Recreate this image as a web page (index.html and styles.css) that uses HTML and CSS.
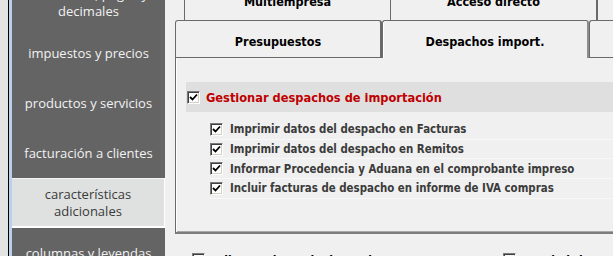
FILE: index.html
```
<!DOCTYPE html>
<html>
<head>
<meta charset="utf-8">
<link rel="stylesheet" href="styles.css">
</head>
<body>
<div class="screen">
  <div class="gutter"></div>
  <div class="rule"></div>
  <div class="accent"></div>
  <nav class="menu">
    <div class="item">cantidades, pagos y<br>decimales</div>
    <div class="item">impuestos y precios</div>
    <div class="item">productos y servicios</div>
    <div class="item">facturación a clientes</div>
    <div class="item selected">características<br>adicionales</div>
    <div class="item">columnas y leyendas</div>
  </nav>
  <main class="main">
    <div class="tabs-back">
      <div class="btab btab-first"><span class="blabel">Multiempresa</span></div>
      <div class="btab"><span class="blabel">Acceso directo</span></div>
    </div>
    <div class="tabs-front">
      <div class="ftab">Presupuestos</div>
      <div class="ftab active">Despachos import.</div>
      <div class="ftab last"></div>
    </div>
    <section class="panel">
      <div class="band">
        <span class="cb"><svg viewBox="0 0 9 9" width="9" height="9"><polyline points="1,4 3.5,6.5 8,1.5" fill="none" stroke="#000" stroke-width="1.8"/></svg></span>
        <span class="band-text">Gestionar despachos de importación</span>
      </div>
      <div class="rows">
        <div class="row"><span class="cb"><svg viewBox="0 0 9 9" width="9" height="9"><polyline points="1,4 3.5,6.5 8,1.5" fill="none" stroke="#000" stroke-width="1.8"/></svg></span><span class="row-text">Imprimir datos del despacho en Facturas</span></div>
        <div class="row"><span class="cb"><svg viewBox="0 0 9 9" width="9" height="9"><polyline points="1,4 3.5,6.5 8,1.5" fill="none" stroke="#000" stroke-width="1.8"/></svg></span><span class="row-text">Imprimir datos del despacho en Remitos</span></div>
        <div class="row"><span class="cb"><svg viewBox="0 0 9 9" width="9" height="9"><polyline points="1,4 3.5,6.5 8,1.5" fill="none" stroke="#000" stroke-width="1.8"/></svg></span><span class="row-text">Informar Procedencia y Aduana en el comprobante impreso</span></div>
        <div class="row"><span class="cb"><svg viewBox="0 0 9 9" width="9" height="9"><polyline points="1,4 3.5,6.5 8,1.5" fill="none" stroke="#000" stroke-width="1.8"/></svg></span><span class="row-text">Incluir facturas de despacho en informe de IVA compras</span></div>
      </div>
    </section>
    <div class="below">
      <div class="opt opt-a"><span class="cb empty"></span><span class="opt-text">Adjuntar datos de despacho</span></div>
      <div class="opt opt-b"><span class="cb empty"></span><span class="opt-text">Imprimir lote</span></div>
    </div>
  </main>
</div>
</body>
</html>
```
FILE: styles.css
```
* { box-sizing: border-box; }
html, body { margin: 0; padding: 0; }
body { width: 613px; height: 256px; overflow: hidden; background: #f0f0f0; }

.screen { display: flex; width: 613px; height: 256px; overflow: hidden; }
.gutter { width: 8px; background: #e3e3e3; flex: none; }
.rule { width: 1px; background: #000; flex: none; }
.accent { width: 3px; background: #b9d1ea; flex: none; }

.menu {
  width: 153px; flex: none; background: #646464;
  display: flex; flex-direction: column; margin-top: -22px;
  font-family: "Open Sans", "Noto Sans", sans-serif; font-size: 13px; color: #f2f2f2;
}
.item {
  height: 50px; flex: none; display: flex; align-items: center; justify-content: center;
  text-align: center; line-height: 17px;
}
.item.selected {
  background: #dfe1e1; color: #3a3a3a;
  border-top: 1px solid #f4f4f4; border-right: 1px solid #fff; border-bottom: 2px solid #fff;
}

.main {
  flex: 1; background: #f0f0f0; display: flex; flex-direction: column;
  font-family: "DejaVu Sans Condensed", "DejaVu Sans", sans-serif; font-weight: bold;
  font-stretch: condensed;
}

.tabs-back { height: 20px; display: flex; padding-left: 19px; flex: none; }
.btab {
  width: 207px; height: 20px; border-right: 2px solid #6a6a6a;
  display: flex; justify-content: center; align-items: flex-start;
  font-size: 12.5px; color: #000;
}
.btab-first { width: 207px; border-left: 1px solid #6a6a6a; border-right: 1px solid #6a6a6a; }
.blabel { display: block; line-height: 14px; margin-top: -5px; }

.tabs-front { height: 38px; display: flex; padding-left: 10px; flex: none; }
.ftab {
  width: 207px; height: 38px; flex: none;
  border-top: 1px solid #6a6a6a; border-left: 1px solid #6a6a6a;
  border-right: 2px solid #6a6a6a; border-bottom: 1px solid #6a6a6a;
  border-top-left-radius: 3px; border-top-right-radius: 3px;
  background: #f0f0f0; font-size: 12.5px; color: #000;
  display: flex; justify-content: center; align-items: flex-start; padding-top: 13px;
  line-height: 15px;
}
.ftab.active {
  border-bottom: none; border-right: 2px solid #8c8c8c;
  box-shadow: inset 1px 0 #fff;
}
.ftab.last { width: 40px; border-right: none; }

.panel {
  margin-left: 10px; height: 176px; flex: none;
  border-left: 1px solid #6a6a6a; border-bottom: 2px solid #7c7c7c;
  box-shadow: inset 1px 0 #fff, inset 0 -1px #a8a8a8;
  padding-top: 24px; padding-left: 10px;
}
.band {
  height: 30px; background: #dfdfdf; display: flex; align-items: center;
  padding-left: 1px;
}
.band-text { color: #c00000; font-size: 12.7px; margin-left: 6px; }

.cb {
  width: 13px; height: 13px; flex: none; background: #fff;
  border-top: 1px solid #7a7a7a; border-left: 1px solid #7a7a7a;
  border-right: 1px solid #fff; border-bottom: 1px solid #fff;
  box-shadow: inset 1px 1px #404040, inset -1px -1px #d4d0c8;
  display: flex; align-items: center; justify-content: center;
}
.cb svg { display: block; }

.rows { margin-top: 8px; padding-left: 24px; }
.row {
  height: 19.7px; display: flex; align-items: center;
  border-bottom: 1px solid #f8f8f8;
}
.row-text { color: #3b3b3b; font-size: 11.4px; margin-left: 7px; }

.below { flex: 1; display: flex; padding-top: 19px; font-size: 12px; color: #000; }
.opt { display: flex; align-items: flex-start; }
.opt-a { margin-left: 27px; width: 311px; }
.opt-text { margin-left: 7px; line-height: 13px; margin-top: 2px; }
.cb.empty { background: #f6f6f6; }
```
